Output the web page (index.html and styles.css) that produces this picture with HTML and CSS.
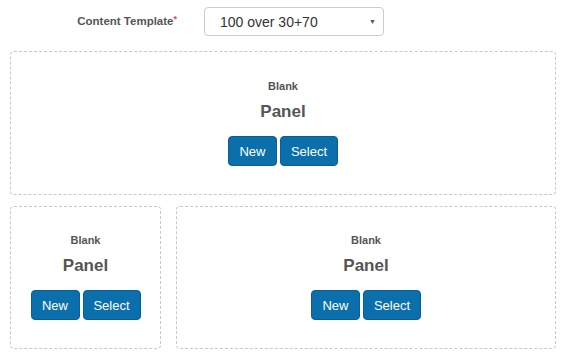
FILE: index.html
```html
<!DOCTYPE html>
<html>
<head>
<meta charset="utf-8">
<link rel="stylesheet" href="styles.css">
</head>
<body>
<div class="page">
  <div class="form-row">
    <label class="field-label">Content Template<span class="req">*</span></label>
    <div class="select">
      <span class="select-value">100 over 30+70</span>
      <span class="caret">&#9660;</span>
    </div>
  </div>
  <div class="panel panel-full">
    <div class="blank">Blank</div>
    <div class="title">Panel</div>
    <div class="btns"><button class="btn btn-new">New</button><button class="btn btn-select">Select</button></div>
  </div>
  <div class="row">
    <div class="panel panel-small">
      <div class="blank">Blank</div>
      <div class="title">Panel</div>
      <div class="btns"><button class="btn btn-new">New</button><button class="btn btn-select">Select</button></div>
    </div>
    <div class="panel panel-small">
      <div class="blank">Blank</div>
      <div class="title">Panel</div>
      <div class="btns"><button class="btn btn-new">New</button><button class="btn btn-select">Select</button></div>
    </div>
  </div>
</div>
</body>
</html>
```
FILE: styles.css
```css
* { box-sizing: border-box; }
html, body { margin: 0; padding: 0; background: #fff; }
body { font-family: "Liberation Sans", Arial, sans-serif; color: #555; }
.page { padding: 7px 6px 0 10px; width: 562px; }
.form-row { display: flex; align-items: center; height: 29px; margin-bottom: 15px; }
.field-label { width: 194px; text-align: right; padding-right: 27px; font-size: 11.5px; font-weight: bold; color: #555; margin-top: -1px; }
.req { color: #e04a3a; font-size: 9px; vertical-align: top; position: relative; top: -1px; }
.select { width: 180px; height: 29px; border: 1px solid #ccc; border-radius: 4px; display: flex; align-items: center; padding: 0 0 0 15px; }
.select-value { font-size: 14px; color: #333; flex: 1; }
.caret { font-size: 7px; color: #555; margin-right: 7px; }
.panel { border: 1px dashed #c8c8c8; border-radius: 4px; text-align: center; }
.panel-full { height: 144px; padding-top: 26px; margin-bottom: 11px; }
.row { display: grid; grid-template-columns: 151px 380px; column-gap: 15px; }
.panel-small { height: 143px; padding-top: 25px; }
.blank { font-size: 11px; font-weight: bold; line-height: 16px; color: #555; }
.title { font-size: 17px; font-weight: bold; line-height: 20px; margin-top: 8px; color: #555; }
.btns { display: flex; justify-content: center; gap: 3px; margin-top: 14px; }
.btn { height: 30px; border: 1px solid #0b5e92; border-radius: 4px; background: #0a6fab; color: #fff; font-family: "Liberation Sans", Arial, sans-serif; font-size: 13px; padding: 0; margin: 0; }
.btn-new { width: 49px; }
.btn-select { width: 58px; }
```
